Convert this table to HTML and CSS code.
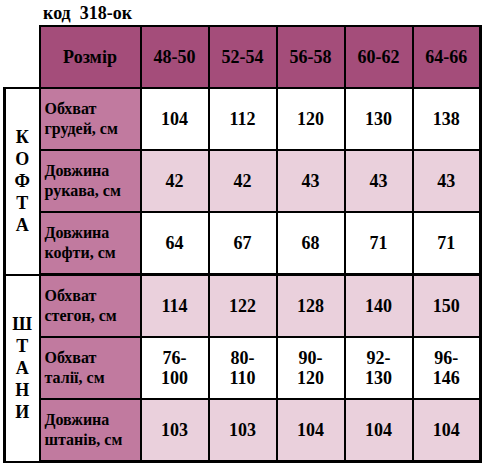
FILE: index.html
```html
<!DOCTYPE html>
<html>
<head>
<meta charset="utf-8">
<link rel="stylesheet" href="styles.css">
</head>
<body>
<div class="title">код&nbsp; 318-ок</div>
<table class="sizes">
  <colgroup>
    <col class="c-sec"><col class="c-lab"><col class="c-val"><col class="c-val"><col class="c-val"><col class="c-val"><col class="c-val">
  </colgroup>
  <tr class="head">
    <td class="blank"></td>
    <th>Розмір</th><th>48-50</th><th>52-54</th><th>56-58</th><th>60-62</th><th>64-66</th>
  </tr>
  <tr class="white">
    <td class="sec" rowspan="3">К<br>О<br>Ф<br>Т<br>А</td>
    <td class="lab">Обхват<br>грудей, см</td><td>104</td><td>112</td><td>120</td><td>130</td><td>138</td>
  </tr>
  <tr class="pink">
    <td class="lab">Довжина<br>рукава, см</td><td>42</td><td>42</td><td>43</td><td>43</td><td>43</td>
  </tr>
  <tr class="white">
    <td class="lab">Довжина<br>кофти, см</td><td>64</td><td>67</td><td>68</td><td>71</td><td>71</td>
  </tr>
  <tr class="pink split">
    <td class="sec" rowspan="3">Ш<br>Т<br>А<br>Н<br>И</td>
    <td class="lab">Обхват<br>стегон, см</td><td>114</td><td>122</td><td>128</td><td>140</td><td>150</td>
  </tr>
  <tr class="white">
    <td class="lab">Обхват<br>талії, см</td><td>76-<br>100</td><td>80-<br>110</td><td>90-<br>120</td><td>92-<br>130</td><td>96-<br>146</td>
  </tr>
  <tr class="pink">
    <td class="lab">Довжина<br>штанів, см</td><td>103</td><td>103</td><td>104</td><td>104</td><td>104</td>
  </tr>
</table>
</body>
</html>
```

FILE: styles.css
```css
html, body {
  margin: 0;
  padding: 0;
  background: #ffffff;
}
body {
  font-family: "Liberation Serif", "Times New Roman", serif;
  font-weight: bold;
  color: #000;
}
.title {
  font-size: 18px;
  line-height: 20px;
  padding: 3px 0 0 43px;
  height: 22px;
}
.sizes {
  margin-left: 3px;
  border-collapse: collapse;
  table-layout: fixed;
  width: 478px;
}
.c-sec { width: 35px; }
.c-lab { width: 101px; }
.c-val { width: 68px; }
.sizes td, .sizes th {
  border: 2px solid #000;
  text-align: center;
  vertical-align: middle;
  font-size: 18px;
  line-height: 20px;
  padding: 0;
  height: 60px;
}
.sizes td.blank {
  border: none;
  background: transparent;
}
.head th {
  background: #a44d7a;
  font-weight: bold;
}
.sizes td.lab {
  background: #c17a9f;
  text-align: left;
  padding-left: 4px;
  font-size: 16px;
}
.pink td { background: #ead0dc; }
.white td { background: #ffffff; }
.sizes td.sec {
  background: #ffffff;
  font-size: 18px;
  line-height: 22px;
  border-width: 2px 1px 2px 2px;
  border-left-width: 3px;
}
.split td { border-top-width: 3px; }
.sizes td:last-child, .sizes th:last-child { border-right-width: 3px; }
.sizes tr:last-child td { border-bottom-width: 3px; }
```
